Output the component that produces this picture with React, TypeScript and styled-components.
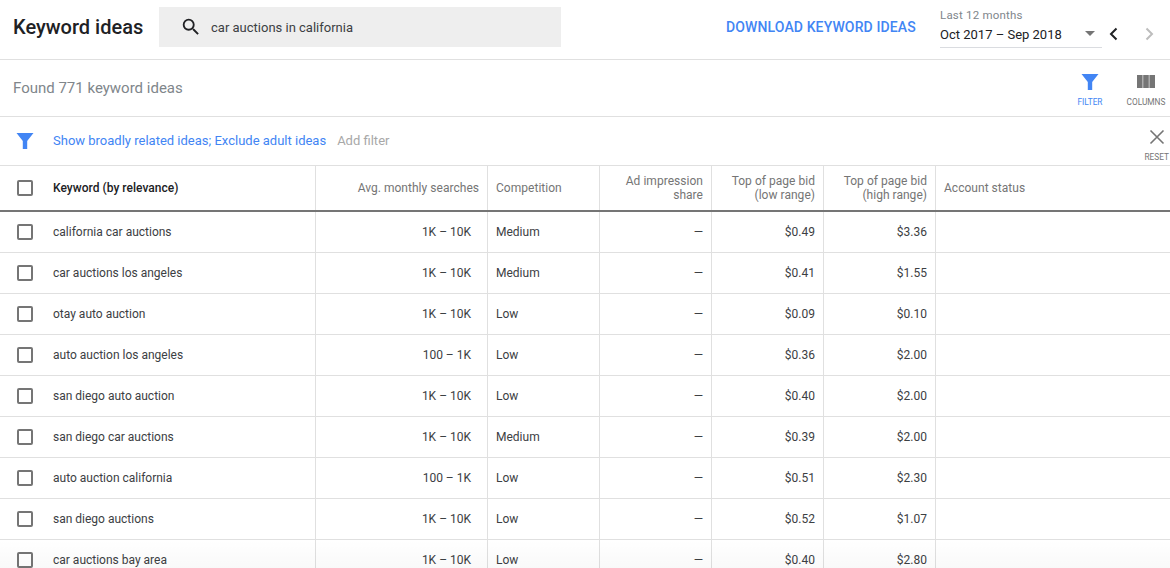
import React from "react";
import styled, { createGlobalStyle } from "styled-components";

const GlobalStyle = createGlobalStyle`
  html, body {
    margin: 0;
    padding: 0;
    height: 100%;
    overflow: hidden;
    background: #fff;
    font-family: Roboto, "Liberation Sans", sans-serif;
  }
`;

const Page = styled.div`
  position: relative;
  width: 1170px;
  height: 568px;
  overflow: hidden;
  background: #fff;
`;

const Header = styled.header`
  display: flex;
  align-items: center;
  height: 59px;
  border-bottom: 1px solid #e0e0e0;
`;

const Title = styled.h1`
  margin: 0 0 5px;
  padding-left: 13px;
  width: 146px;
  font-size: 20px;
  font-weight: 500;
  color: #202124;
  white-space: nowrap;
`;

const SearchBox = styled.div`
  display: flex;
  align-items: center;
  gap: 9px;
  width: 402px;
  height: 40px;
  margin-bottom: 5px;
  padding-left: 21px;
  box-sizing: border-box;
  background: #eeeeee;
  font-size: 13px;
  color: #3c4043;
`;

const DownloadLink = styled.a`
  margin-left: 165px;
  margin-bottom: 6px;
  width: 214px;
  font-size: 14px;
  font-weight: 500;
  letter-spacing: 0.12px;
  color: #4285f4;
  white-space: nowrap;
`;

const DatePicker = styled.div`
  display: flex;
  flex-direction: column;
  width: 230px;
  margin-bottom: 4px;
`;

const DateLabel = styled.div`
  font-size: 11.5px;
  line-height: 14px;
  color: #80868b;
  letter-spacing: 0.2px;
`;

const DateControl = styled.div`
  display: flex;
  align-items: center;
  height: 24px;
  margin-top: 2px;
  font-size: 13px;
  color: #202124;
`;

const DateValue = styled.div`
  display: flex;
  flex: none;
  align-items: center;
  justify-content: space-between;
  width: 162px;
  height: 24px;
  box-sizing: border-box;
  border-bottom: 1px solid #dadce0;
  padding: 0 7px 2px 0;
  white-space: nowrap;
`;

const Caret = styled.span`
  width: 0;
  height: 0;
  margin-bottom: 2px;
  border-left: 5px solid transparent;
  border-right: 5px solid transparent;
  border-top: 5px solid #757575;
`;

const PagerIcon = styled.svg<{ $offset: number }>`
  flex: none;
  margin: 0 0 3px ${(p) => p.$offset}px;
`;

const Toolbar = styled.div`
  display: flex;
  align-items: center;
  justify-content: space-between;
  height: 56px;
  border-bottom: 1px solid #e0e0e0;
`;

const FoundText = styled.div`
  padding-left: 13px;
  font-size: 15px;
  color: #80868b;
`;

const ToolGroup = styled.div`
  display: flex;
  align-items: flex-start;
  gap: 13px;
  padding-top: 4px;
`;

const ToolButton = styled.div<{ $active?: boolean; $width: number }>`
  display: flex;
  flex-direction: column;
  align-items: center;
  width: ${(p) => p.$width}px;
  font-size: 8.3px;
  line-height: 10px;
  color: ${(p) => (p.$active ? "#4285f4" : "#757575")};
  svg {
    margin-bottom: 6px;
  }
`;

const FilterRow = styled.div`
  display: flex;
  align-items: center;
  height: 48px;
  border-bottom: 1px solid #e0e0e0;
  font-size: 13px;
`;

const FilterIconWrap = styled.div`
  display: flex;
  width: 53px;
  padding-left: 16px;
  box-sizing: border-box;
`;

const FilterLink = styled.span`
  margin-bottom: 2px;
  color: #4285f4;
`;

const AddFilter = styled.span`
  margin: 0 0 2px 11px;
  color: #a8a8a8;
`;

const ResetButton = styled.div`
  display: flex;
  flex-direction: column;
  align-items: center;
  margin-left: auto;
  padding: 9px 1px 0 0;
  font-size: 8.3px;
  line-height: 10px;
  color: #757575;
  svg {
    margin-bottom: 7px;
  }
`;

const columns = "316px 172px 112px 112px 112px 112px 1fr";

const HeadRow = styled.div`
  display: grid;
  grid-template-columns: ${columns};
  height: 44px;
  border-bottom: 2px solid #757575;
`;

const Row = styled.div`
  display: grid;
  grid-template-columns: ${columns};
  height: 40px;
  border-bottom: 1px solid #e0e0e0;
`;

const Cell = styled.div<{ $right?: boolean; $last?: boolean; $inset?: number }>`
  display: flex;
  align-items: center;
  justify-content: ${(p) => (p.$right ? "flex-end" : "flex-start")};
  padding: 0 ${(p) => p.$inset ?? 8}px 0 8px;
  box-sizing: border-box;
  border-right: ${(p) => (p.$last ? "none" : "1px solid #e0e0e0")};
  font-size: 12px;
  color: #3c4043;
  white-space: nowrap;
`;

const HeadCell = styled(Cell)`
  color: #757575;
  line-height: 14px;
  text-align: right;
  letter-spacing: 0.03px;
`;

const KeywordCell = styled(Cell)`
  padding: 0;
`;

const KeywordHead = styled.span`
  font-weight: 500;
  color: #202124;
  letter-spacing: 0.03px;
`;

const Check = styled.span`
  flex: none;
  width: 12px;
  height: 12px;
  margin: 0 20px 0 17px;
  border: 2px solid #757575;
  border-radius: 2px;
`;

const BottomFade = styled.div`
  position: absolute;
  left: 0;
  right: 0;
  bottom: 0;
  height: 28px;
  background: linear-gradient(to bottom, rgba(0, 0, 0, 0), rgba(0, 0, 0, 0.025));
  pointer-events: none;
`;

const FunnelIcon = ({ size }: { size: number }) => (
  <svg width={size} height={size} viewBox="0 0 18 18" fill="#4285f4">
    <path d="M0.5 1h17l-6.3 8v8H6.8V9z" />
  </svg>
);

const rows = [
  ["california car auctions", "1K – 10K", "Medium", "$0.49", "$3.36"],
  ["car auctions los angeles", "1K – 10K", "Medium", "$0.41", "$1.55"],
  ["otay auto auction", "1K – 10K", "Low", "$0.09", "$0.10"],
  ["auto auction los angeles", "100 – 1K", "Low", "$0.36", "$2.00"],
  ["san diego auto auction", "1K – 10K", "Low", "$0.40", "$2.00"],
  ["san diego car auctions", "1K – 10K", "Medium", "$0.39", "$2.00"],
  ["auto auction california", "100 – 1K", "Low", "$0.51", "$2.30"],
  ["san diego auctions", "1K – 10K", "Low", "$0.52", "$1.07"],
  ["car auctions bay area", "1K – 10K", "Low", "$0.40", "$2.80"],
];

export default function App() {
  return (
    <Page>
      <GlobalStyle />
      <Header>
        <Title>Keyword ideas</Title>
        <SearchBox>
          <svg width="22" height="22" viewBox="0 0 24 24" fill="#202124">
            <path d="M15.5 14h-.79l-.28-.27A6.47 6.47 0 0 0 16 9.5 6.5 6.5 0 1 0 9.5 16c1.61 0 3.09-.59 4.23-1.57l.27.28v.79l5 4.99L20.49 19l-4.99-5zm-6 0C7.01 14 5 11.99 5 9.5S7.01 5 9.5 5 14 7.01 14 9.5 11.99 14 9.5 14z" />
          </svg>
          car auctions in california
        </SearchBox>
        <DownloadLink>DOWNLOAD KEYWORD IDEAS</DownloadLink>
        <DatePicker>
          <DateLabel>Last 12 months</DateLabel>
          <DateControl>
            <DateValue>
              Oct 2017 – Sep 2018
              <Caret />
            </DateValue>
            <PagerIcon $offset={4} width="16" height="16" viewBox="0 0 16 16" fill="none" stroke="#202124" strokeWidth="2">
              <path d="M10.5 2.5 5 8l5.500 5.500" />
            </PagerIcon>
            <PagerIcon $offset={19} width="16" height="16" viewBox="0 0 16 16" fill="none" stroke="#bdbdbd" strokeWidth="2">
              <path d="M5.500 2.500 11 8l-5.500 5.500" />
            </PagerIcon>
          </DateControl>
        </DatePicker>
      </Header>
      <Toolbar>
        <FoundText>Found 771 keyword ideas</FoundText>
        <ToolGroup>
          <ToolButton $active $width={38}>
            <FunnelIcon size={18} />
            FILTER
          </ToolButton>
          <ToolButton $width={48}>
            <svg width="18" height="18" viewBox="0 0 18 18" fill="#757575">
              <path d="M0 2h5.600v13H0zM6.200 2h5.600v13H6.200zM12.400 2H18v13h-5.600z" />
            </svg>
            COLUMNS
          </ToolButton>
        </ToolGroup>
      </Toolbar>
      <FilterRow>
        <FilterIconWrap>
          <FunnelIcon size={18} />
        </FilterIconWrap>
        <FilterLink>Show broadly related ideas; Exclude adult ideas</FilterLink>
        <AddFilter>Add filter</AddFilter>
        <ResetButton>
          <svg width="16" height="16" viewBox="0 0 16 16" fill="none" stroke="#757575" strokeWidth="1.600">
            <path d="M1.500 1.500l13 13M14.500 1.500l-13 13" />
          </svg>
          RESET
        </ResetButton>
      </FilterRow>
      <HeadRow>
        <KeywordCell>
          <Check />
          <KeywordHead>Keyword (by relevance)</KeywordHead>
        </KeywordCell>
        <HeadCell $right>Avg. monthly searches</HeadCell>
        <HeadCell>Competition</HeadCell>
        <HeadCell $right>
          Ad impression
          <br />
          share
        </HeadCell>
        <HeadCell $right>
          Top of page bid
          <br />
          (low range)
        </HeadCell>
        <HeadCell $right>
          Top of page bid
          <br />
          (high range)
        </HeadCell>
        <HeadCell $last>Account status</HeadCell>
      </HeadRow>
      {rows.map(([keyword, searches, competition, low, high]) => (
        <Row key={keyword}>
          <KeywordCell>
            <Check />
            {keyword}
          </KeywordCell>
          <Cell $right $inset={16}>{searches}</Cell>
          <Cell>{competition}</Cell>
          <Cell $right>—</Cell>
          <Cell $right>{low}</Cell>
          <Cell $right>{high}</Cell>
          <Cell $last />
        </Row>
      ))}
      <BottomFade />
    </Page>
  );
}
